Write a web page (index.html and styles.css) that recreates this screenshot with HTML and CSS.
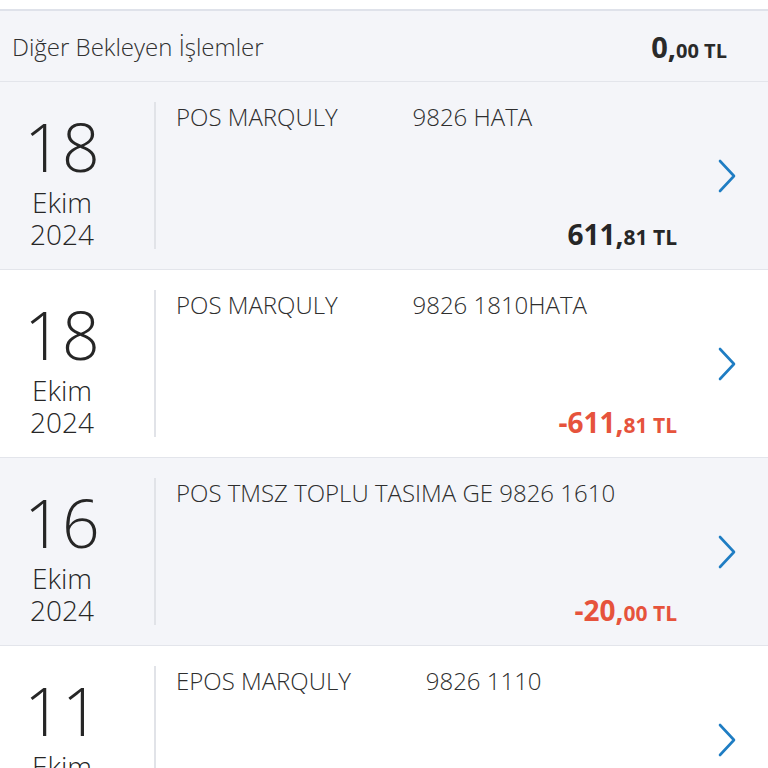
FILE: index.html
```html
<!DOCTYPE html>
<html lang="tr">
<head>
<meta charset="utf-8">
<title>Diğer Bekleyen İşlemler</title>
<link rel="stylesheet" href="styles.css">
</head>
<body>
<div class="page">
  <div class="topbar"></div>
  <div class="summary">
    <span class="summary-title">Diğer Bekleyen İşlemler</span>
    <span class="summary-amount"><span class="int">0,</span><span class="dec">00 TL</span></span>
  </div>

  <div class="row alt">
    <div class="date">
      <div class="day">18</div>
      <div class="month">Ekim</div>
      <div class="year">2024</div>
    </div>
    <div class="content">
      <div class="desc">POS MARQULY            9826 HATA</div>
      <div class="amount"><span class="int">611,</span><span class="dec">81 TL</span></div>
    </div>
    <div class="chev"><svg width="20" height="34" viewBox="0 0 20 34"><path d="M3 2 L17 17 L3 32" fill="none" stroke="#1f7dc3" stroke-width="2.6" stroke-linecap="round" stroke-linejoin="round"/></svg></div>
  </div>

  <div class="row">
    <div class="date">
      <div class="day">18</div>
      <div class="month">Ekim</div>
      <div class="year">2024</div>
    </div>
    <div class="content">
      <div class="desc">POS MARQULY            9826 1810HATA</div>
      <div class="amount neg"><span class="int">-611,</span><span class="dec">81 TL</span></div>
    </div>
    <div class="chev"><svg width="20" height="34" viewBox="0 0 20 34"><path d="M3 2 L17 17 L3 32" fill="none" stroke="#1f7dc3" stroke-width="2.6" stroke-linecap="round" stroke-linejoin="round"/></svg></div>
  </div>

  <div class="row alt">
    <div class="date">
      <div class="day">16</div>
      <div class="month">Ekim</div>
      <div class="year">2024</div>
    </div>
    <div class="content">
      <div class="desc">POS TMSZ TOPLU TASIMA GE 9826 1610</div>
      <div class="amount neg"><span class="int">-20,</span><span class="dec">00 TL</span></div>
    </div>
    <div class="chev"><svg width="20" height="34" viewBox="0 0 20 34"><path d="M3 2 L17 17 L3 32" fill="none" stroke="#1f7dc3" stroke-width="2.6" stroke-linecap="round" stroke-linejoin="round"/></svg></div>
  </div>

  <div class="row">
    <div class="date">
      <div class="day">11</div>
      <div class="month">Ekim</div>
      <div class="year">2024</div>
    </div>
    <div class="content">
      <div class="desc">EPOS MARQULY            9826 1110</div>
      <div class="amount neg"><span class="int">-5,</span><span class="dec">00 TL</span></div>
    </div>
    <div class="chev"><svg width="20" height="34" viewBox="0 0 20 34"><path d="M3 2 L17 17 L3 32" fill="none" stroke="#1f7dc3" stroke-width="2.6" stroke-linecap="round" stroke-linejoin="round"/></svg></div>
  </div>
</div>
</body>
</html>
```

FILE: styles.css
```css
html, body {
  margin: 0;
  padding: 0;
  overflow: hidden;
  background: #ffffff;
}

body {
  font-family: "Open Sans", "Noto Sans", sans-serif;
  color: #2a2a2a;
}

.page {
  width: 768px;
}

.topbar {
  height: 9px;
  background: #ffffff;
  border-bottom: 2px solid #dfe2ea;
}

.summary {
  height: 70px;
  background: #f4f5f9;
  border-bottom: 1px solid #e3e5eb;
  display: flex;
  align-items: center;
  justify-content: space-between;
  padding: 0 41px 0 12px;
}

.summary-title {
  font-size: 24px;
  font-weight: 350;
  color: #303030;
}

.summary-amount {
  font-weight: 700;
  color: #2a2a2a;
}

.summary-amount .int {
  font-size: 29px;
}

.summary-amount .dec {
  font-size: 20px;
}

.row {
  display: flex;
  height: 187px;
  background: #ffffff;
  border-bottom: 1px solid #e3e5eb;
  box-sizing: content-box;
}

.row.alt {
  background: #f4f5f9;
}

.date {
  width: 124px;
  margin-right: 30px;
  padding-top: 25px;
  text-align: center;
  font-weight: 300;
  color: #262626;
}

.day {
  font-size: 66px;
  line-height: 79px;
}

.month,
.year {
  font-size: 28px;
  line-height: 32px;
}

.content {
  flex: 1;
  margin: 20px 0;
  border-left: 2px solid #e1e3e8;
  padding-left: 20px;
  display: flex;
  flex-direction: column;
  justify-content: space-between;
}

.desc {
  font-size: 24px;
  font-weight: 300;
  line-height: 29px;
  white-space: pre;
  color: #2e2e2e;
}

.amount {
  align-self: flex-end;
  font-weight: 700;
  color: #262626;
  line-height: 30px;
  margin-bottom: -5px;
}

.amount .int {
  font-size: 28px;
}

.amount .dec {
  font-size: 21px;
}

.amount.neg {
  color: #e6533c;
}

.chev {
  width: 91px;
  display: flex;
  align-items: center;
  justify-content: center;
  padding-left: 8px;
  box-sizing: border-box;
}

.chev svg {
  display: block;
}
```
